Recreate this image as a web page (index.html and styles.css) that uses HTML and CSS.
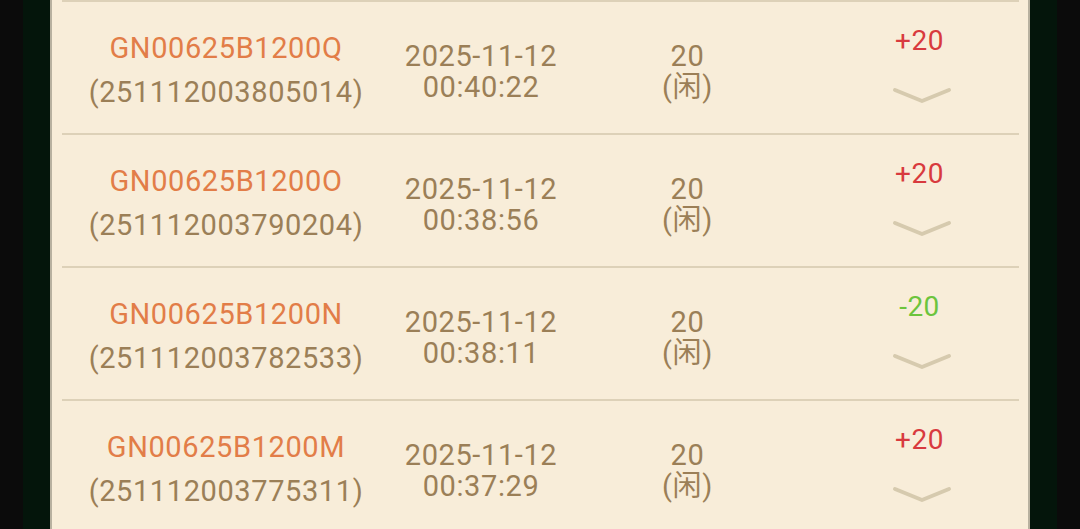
FILE: index.html
```html
<!DOCTYPE html>
<html lang="zh">
<head>
<meta charset="utf-8">
<title>Records</title>
<link rel="stylesheet" href="styles.css">
</head>
<body>
<div class="frame">
  <div class="panel">
    <div class="row">
      <div class="c-id"><div class="code">GN00625B1200Q</div><div class="num">(251112003805014)</div></div>
      <div class="c-time"><div>2025-11-12</div><div>00:40:22</div></div>
      <div class="c-amt"><div>20</div><div>(闲)</div></div>
      <div class="c-res"><div class="res plus">+20</div><svg class="chev" viewBox="0 0 60 20" width="60" height="20"><path d="M3 4 L30 15 L57 4"/></svg></div>
    </div>
    <div class="row">
      <div class="c-id"><div class="code">GN00625B1200O</div><div class="num">(251112003790204)</div></div>
      <div class="c-time"><div>2025-11-12</div><div>00:38:56</div></div>
      <div class="c-amt"><div>20</div><div>(闲)</div></div>
      <div class="c-res"><div class="res plus">+20</div><svg class="chev" viewBox="0 0 60 20" width="60" height="20"><path d="M3 4 L30 15 L57 4"/></svg></div>
    </div>
    <div class="row">
      <div class="c-id"><div class="code">GN00625B1200N</div><div class="num">(251112003782533)</div></div>
      <div class="c-time"><div>2025-11-12</div><div>00:38:11</div></div>
      <div class="c-amt"><div>20</div><div>(闲)</div></div>
      <div class="c-res"><div class="res minus">-20</div><svg class="chev" viewBox="0 0 60 20" width="60" height="20"><path d="M3 4 L30 15 L57 4"/></svg></div>
    </div>
    <div class="row">
      <div class="c-id"><div class="code">GN00625B1200M</div><div class="num">(251112003775311)</div></div>
      <div class="c-time"><div>2025-11-12</div><div>00:37:29</div></div>
      <div class="c-amt"><div>20</div><div>(闲)</div></div>
      <div class="c-res"><div class="res plus">+20</div><svg class="chev" viewBox="0 0 60 20" width="60" height="20"><path d="M3 4 L30 15 L57 4"/></svg></div>
    </div>
  </div>
</div>
</body>
</html>
```

FILE: styles.css
```css
html, body {
  margin: 0;
  padding: 0;
  height: 529px;
  overflow: hidden;
  background: #0b0b0b;
}
.frame {
  margin: 0 23px;
  padding: 0 27px;
  height: 529px;
  background: #04150b;
}
.panel {
  height: 529px;
  background: #f8edd9;
  border-left: 2px solid #b8b1a0;
  border-right: 2px solid #b8b1a0;
  overflow: hidden;
  font-family: Roboto, "Noto Sans CJK SC", sans-serif;
  color: #9b7f57;
}
.row {
  margin: 0 9px 0 10px;
  height: 131px;
  border-top: 2px solid #ddd1b8;
  display: grid;
  grid-template-columns: 328px 182px 231px 1fr;
  align-items: start;
  text-align: center;
}
.c-id {
  padding-top: 24px;
  font-size: 29px;
  letter-spacing: 0.6px;
  line-height: 44px;
}
.code { color: #e27d48; }
.c-time, .c-amt {
  padding-top: 39px;
  font-size: 29px;
  letter-spacing: 0.6px;
  line-height: 31px;
}
.c-res {
  padding-left: 17px;
  padding-top: 24px;
  display: flex;
  flex-direction: column;
  align-items: center;
}
.res {
  font-size: 28px;
  letter-spacing: 0.5px;
  line-height: 30px;
}
.plus { color: #d83a3e; }
.minus { color: #6cc43d; }
.chev {
  margin-top: 30px;
  margin-left: 4px;
  display: block;
}
.chev path {
  fill: none;
  stroke: #d6caae;
  stroke-width: 4;
  stroke-linecap: round;
  stroke-linejoin: round;
}
```
